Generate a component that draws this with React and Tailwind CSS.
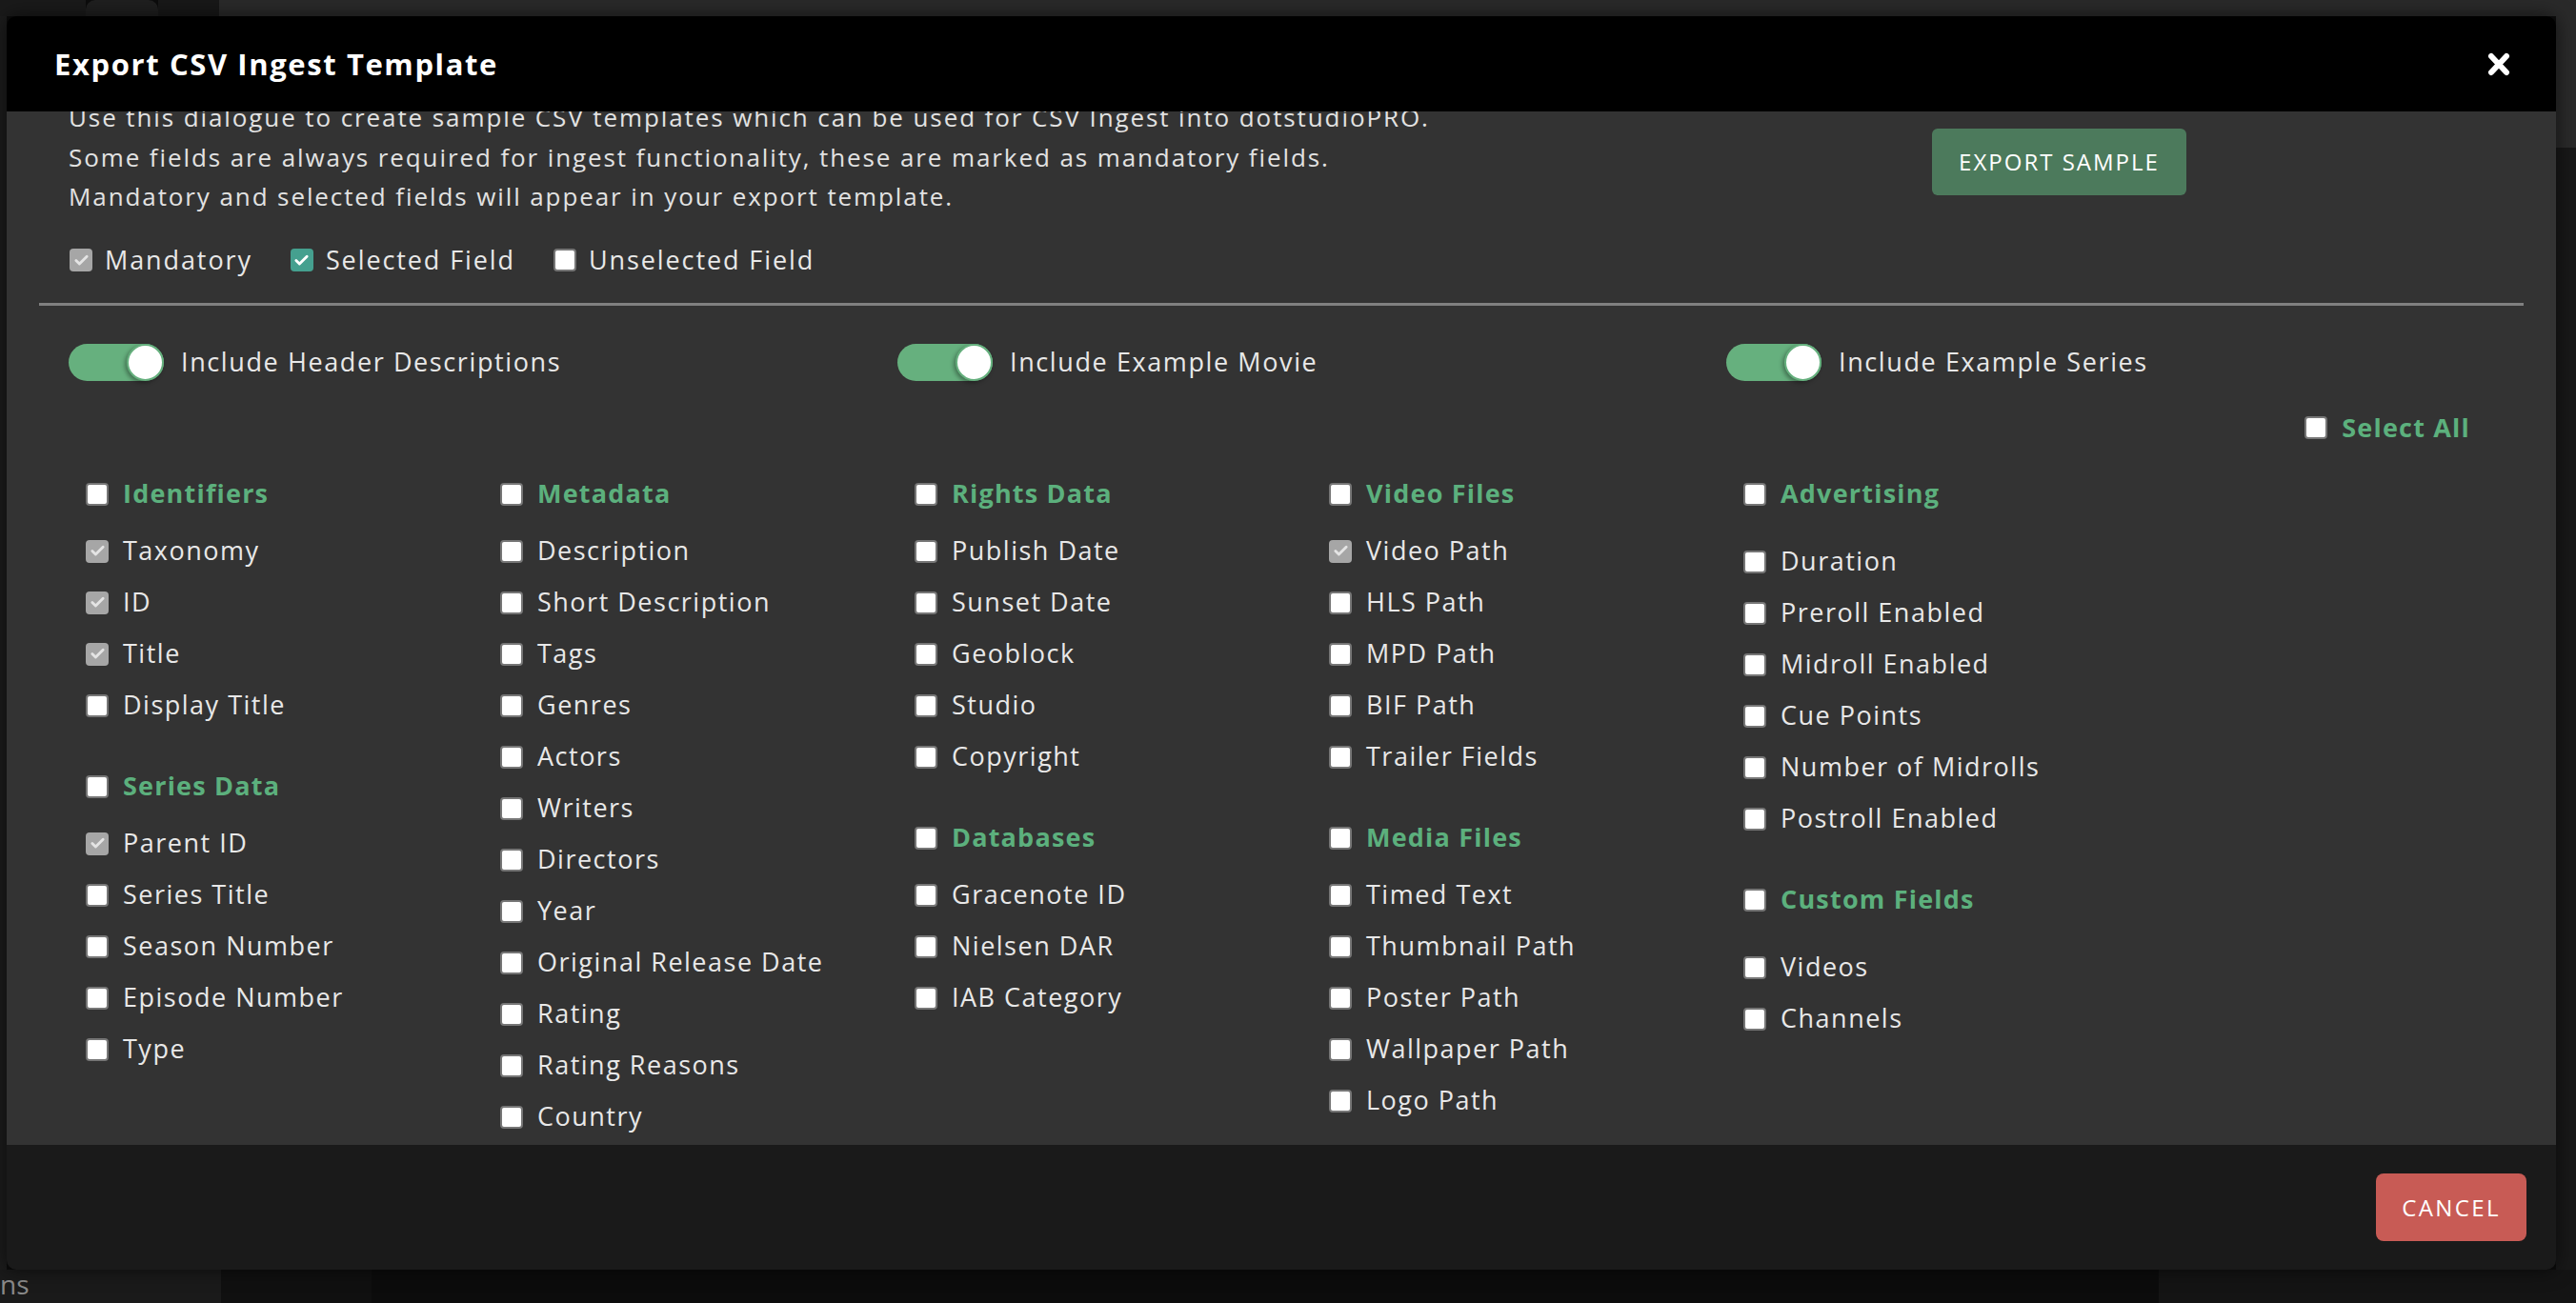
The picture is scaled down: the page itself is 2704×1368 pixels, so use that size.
import { Check } from 'lucide-react';

const groups = [
  [
    { title: 'Identifiers', items: [['Taxonomy', 'm'], ['ID', 'm'], ['Title', 'm'], ['Display Title']] },
    { title: 'Series Data', items: [['Parent ID', 'm'], ['Series Title'], ['Season Number'], ['Episode Number'], ['Type']] },
  ],
  [
    {
      title: 'Metadata',
      items: [['Description'], ['Short Description'], ['Tags'], ['Genres'], ['Actors'], ['Writers'], ['Directors'], ['Year'], ['Original Release Date'], ['Rating'], ['Rating Reasons'], ['Country']],
    },
  ],
  [
    { title: 'Rights Data', items: [['Publish Date'], ['Sunset Date'], ['Geoblock'], ['Studio'], ['Copyright']] },
    { title: 'Databases', items: [['Gracenote ID'], ['Nielsen DAR'], ['IAB Category']] },
  ],
  [
    { title: 'Video Files', items: [['Video Path', 'm'], ['HLS Path'], ['MPD Path'], ['BIF Path'], ['Trailer Fields']] },
    { title: 'Media Files', items: [['Timed Text'], ['Thumbnail Path'], ['Poster Path'], ['Wallpaper Path'], ['Logo Path']] },
  ],
  [
    { title: 'Advertising', wide: true, items: [['Duration'], ['Preroll Enabled'], ['Midroll Enabled'], ['Cue Points'], ['Number of Midrolls'], ['Postroll Enabled']] },
    { title: 'Custom Fields', wide: true, items: [['Videos'], ['Channels']] },
  ],
];

// small square box, three states like the legend
function Box({ state }) {
  if (state === 'm') {
    return (
      <span className="w-[24px] h-[24px] shrink-0 rounded-[4px] bg-[#a6a6a6] flex items-center justify-center">
        <Check size={17} strokeWidth={4} className="text-[#e4e4e4]" />
      </span>
    );
  }
  if (state === 's') {
    return (
      <span className="w-[24px] h-[24px] shrink-0 rounded-[4px] bg-[#45a08f] flex items-center justify-center">
        <Check size={17} strokeWidth={4} className="text-white" />
      </span>
    );
  }
  return <span className="w-[24px] h-[24px] shrink-0 rounded-[4px] bg-white border-2 border-[#767676]" />;
}

function Toggle({ label }) {
  return (
    <div className="w-[870px] flex items-center gap-[18px]">
      <span className="w-[100px] h-[39px] rounded-full bg-[#66b07e] flex items-center justify-end">
        <span className="w-[39px] h-[39px] rounded-full bg-white border-2 border-[#66b07e] shadow-[-2px_2px_4px_rgba(0,0,0,0.35)]" />
      </span>
      <span>{label}</span>
    </div>
  );
}

function Group({ group, first }) {
  return (
    <div className={first ? '' : 'mt-[31px]'}>
      <div className={`h-[54px] flex items-center gap-[15px] ${group.wide ? 'mb-[17px]' : 'mb-[6px]'}`}>
        <Box />
        <span className="font-bold tracking-[1.2px] text-[#5cb07d]">{group.title}</span>
      </div>
      {group.items.map(([name, st]) => (
        <div key={name} className="h-[54px] flex items-center gap-[15px]">
          <Box state={st} />
          <span>{name}</span>
        </div>
      ))}
    </div>
  );
}

export default function App() {
  return (
    <div className="relative w-[2704px] h-[1368px] overflow-hidden bg-[#0c0c0c] font-['Open_Sans',sans-serif] text-[#e8e8e8]">
      {/* page behind the dialog */}
      <div className="flex h-[17px]">
        <div className="w-[90px] bg-[#1a1a1a]" />
        <div className="w-[76px] bg-[#1f1f1f] rounded-t-[10px]" />
        <div className="w-[64px] bg-[#181818]" />
        <div className="flex-1 bg-[#2a2a2a]" />
      </div>
      <div className="flex h-[1316px]">
        <div className="w-[7px] bg-[#1c1c1c]" />
        <div className="flex-1" />
        <div className="w-[21px] flex flex-col">
          <div className="h-[138px] bg-[#2a2a2a]" />
          <div className="flex-1 bg-[#181818]" />
        </div>
      </div>
      <div className="flex h-[35px]">
        <div className="w-[232px] bg-[#1a1a1a] text-[#8a8a8a] text-[28px] leading-[30px]">ns</div>
        <div className="w-[158px] bg-[#101010]" />
        <div className="w-[1876px] bg-[#0c0c0c]" />
        <div className="flex-1 bg-[#141414]" />
      </div>

      {/* dialog */}
      <div className="absolute left-[7px] top-[17px] w-[2676px] h-[1316px] rounded-[10px] overflow-hidden flex flex-col shadow-[0_0_20px_rgba(0,0,0,0.6)]">
        <div className="h-[100px] shrink-0 bg-black flex items-center justify-between pl-[50px] pr-[48px]">
          <h2 className="text-[31px] font-bold tracking-[1.6px] text-white">Export CSV Ingest Template</h2>
          <svg width="24" height="25" viewBox="0 0 24 25">
            <path d="M4 4 L20 21 M20 4 L4 21" stroke="white" strokeWidth="6" strokeLinecap="round" />
          </svg>
        </div>

        <div className="flex-1 bg-[#333333] overflow-hidden text-[27px] tracking-[1.5px]">
          <div className="-mt-[14px]">
            <div className="flex justify-between pl-[65px] pr-[388px]">
              <div className="text-[26px] leading-[41.5px] tracking-[1.9px] text-[#e2e2e2]">
                <p>Use this dialogue to create sample CSV templates which can be used for CSV Ingest into dotstudioPRO.</p>
                <p>Some fields are always required for ingest functionality, these are marked as mandatory fields.</p>
                <p>Mandatory and selected fields will appear in your export template.</p>
              </div>
              <button className="mt-[32px] w-[267px] h-[70px] shrink-0 rounded-[6px] bg-[#4c7a5c] text-white text-[24px] tracking-[2px]">
                EXPORT SAMPLE
              </button>
            </div>

            <div className="mt-[25px] h-[41px] pl-[66px] flex items-center gap-[40px] tracking-[1.9px]">
              <div className="flex items-center gap-[13px]">
                <Box state="m" />
                <span>Mandatory</span>
              </div>
              <div className="flex items-center gap-[13px]">
                <Box state="s" />
                <span>Selected Field</span>
              </div>
              <div className="flex items-center gap-[13px]">
                <Box />
                <span>Unselected Field</span>
              </div>
            </div>

            <div className="mt-[24px] mx-[34px] h-[3px] bg-[#808080]" />

            <div className="mt-[39px] h-[42px] pl-[65px] flex items-center tracking-[1.6px]">
              <Toggle label="Include Header Descriptions" />
              <Toggle label="Include Example Movie" />
              <Toggle label="Include Example Series" />
            </div>

            <div className="mt-[27px] h-[41px] pr-[90px] flex items-center justify-end gap-[15px]">
              <Box />
              <span className="font-bold tracking-[1.2px] text-[#5cb07d]">Select All</span>
            </div>

            <div className="mt-[22px] pl-[83px] flex">
              {groups.map((col, i) => (
                <div key={i} className="w-[435px]">
                  {col.map((g, j) => (
                    <Group key={g.title} group={g} first={j === 0} />
                  ))}
                </div>
              ))}
            </div>
          </div>
        </div>

        <div className="h-[131px] shrink-0 bg-[#1a1a1a] flex items-center justify-end pr-[31px]">
          <button className="w-[158px] h-[71px] rounded-[8px] bg-[#c85b55] text-white text-[24px] tracking-[2.4px]">CANCEL</button>
        </div>
      </div>
    </div>
  );
}
